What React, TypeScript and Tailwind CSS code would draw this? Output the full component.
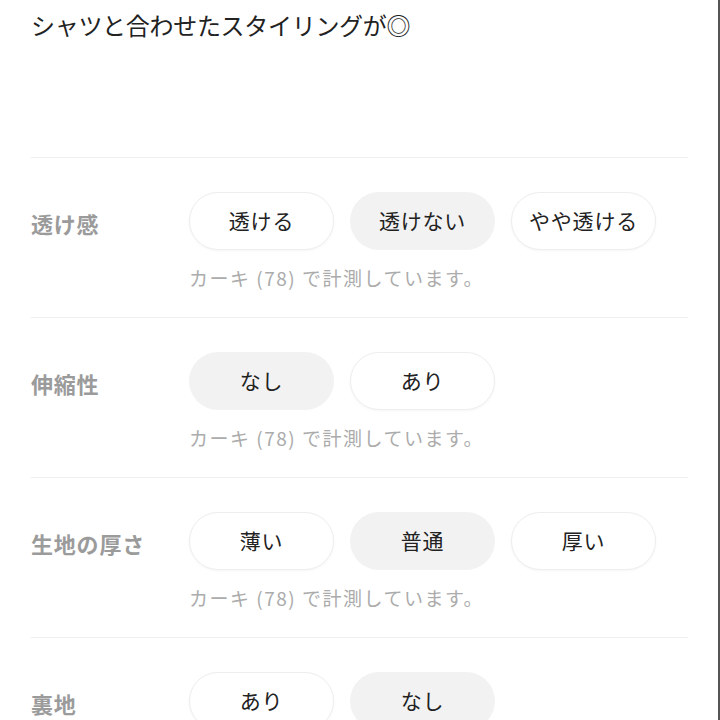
import React from 'react'

type Attr = {
  label: string
  options: string[]
  selected: number
  note?: string
}

const attrs: Attr[] = [
  { label: '透け感', options: ['透ける', '透けない', 'やや透ける'], selected: 1, note: 'カーキ (78) で計測しています。' },
  { label: '伸縮性', options: ['なし', 'あり'], selected: 0, note: 'カーキ (78) で計測しています。' },
  { label: '生地の厚さ', options: ['薄い', '普通', '厚い'], selected: 1, note: 'カーキ (78) で計測しています。' },
  { label: '裏地', options: ['あり', 'なし'], selected: 1 },
]

const AttrRow = ({ attr }: { attr: Attr }) => (
  <div className="border-t border-[#efefef] pt-[34px] pb-[27px]">
    <div className="flex items-center">
      <div className="w-[158px] shrink-0 text-[22px] font-bold tracking-[0.8px] text-[#9b9b9b] leading-none pt-[3px]">
        {attr.label}
      </div>
      <div className="flex gap-[16px]">
        {attr.options.map((o, i) => (
          <div
            key={o}
            className={
              i === attr.selected
                ? 'flex items-center justify-center w-[145px] h-[58px] rounded-full bg-[#f2f2f2] text-[21px] tracking-[0.8px] text-[#222]'
                : 'flex items-center justify-center w-[145px] h-[58px] rounded-full bg-white border border-[#eeeeee] shadow-[0_1px_3px_rgba(0,0,0,0.04)] text-[21px] tracking-[0.8px] text-[#222]'
            }
          >
            {o}
          </div>
        ))}
      </div>
    </div>
    {attr.note && (
      <div className="ml-[158px] mt-[16px] text-[19px] tracking-[1.5px] leading-[24px] text-[#ababab]">
        {attr.note}
      </div>
    )}
  </div>
)

export default function App() {
  return (
    <div
      className="w-[720px] h-[720px] overflow-hidden bg-white border-r-2 border-[#555]"
      style={{ fontFamily: '"Noto Sans CJK JP", "Noto Sans", sans-serif' }}
    >
      <div className="pl-[31px] pr-[30px]">
        <p className="pt-[7px] text-[24px] leading-[36px] text-[#222] tracking-[-0.3px]">
          シャツと合わせたスタイリングが◎
        </p>
        <div className="mt-[114px]">
          {attrs.map((a) => (
            <AttrRow key={a.label} attr={a} />
          ))}
        </div>
      </div>
    </div>
  )
}
